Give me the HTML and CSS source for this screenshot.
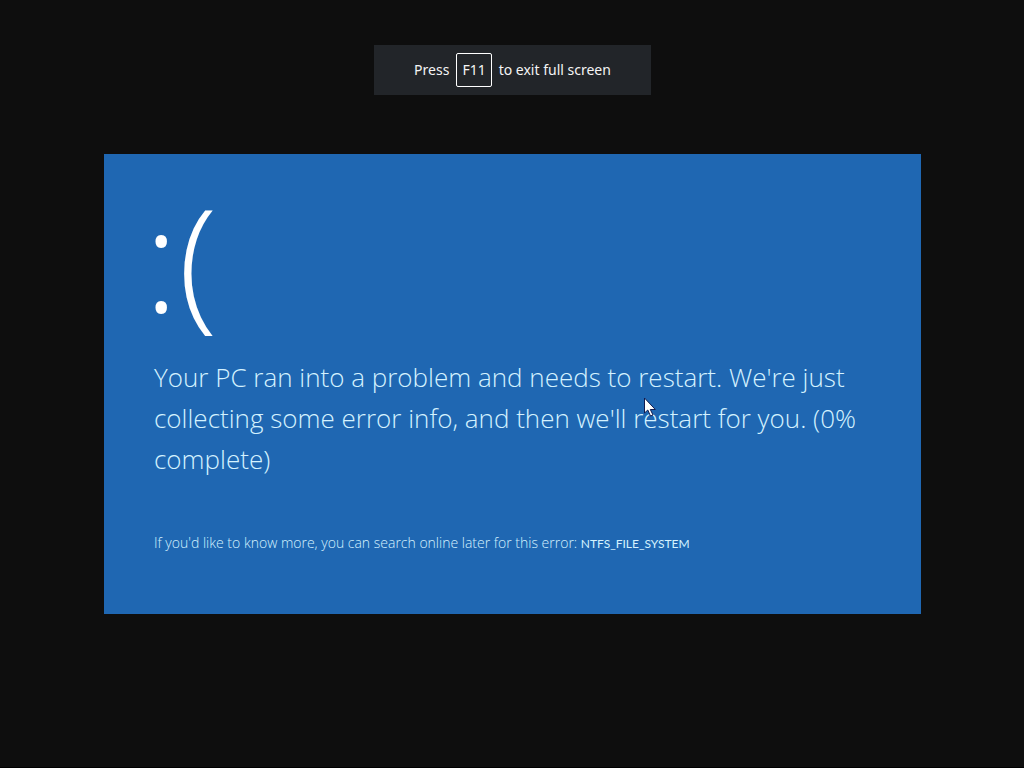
FILE: index.html
```html
<!DOCTYPE html>
<html lang="en">
<head>
<meta charset="UTF-8">
<meta name="viewport" content="width=device-width, initial-scale=1.0">
<title>Your PC ran into a problem</title>
<link rel="stylesheet" href="styles.css">
</head>
<body>
  <div class="hint">
    Press <kbd class="key">F11</kbd> to exit full screen
  </div>

  <main class="screen">
    <div class="face">:(</div>
    <p class="message">Your PC ran into a problem and needs to restart. We're just collecting some error info, and then we'll restart for you. (0% complete)</p>
    <p class="details">If you'd like to know more, you can search online later for this error: <span class="code">NTFS_FILE_SYSTEM</span></p>
  </main>

  <svg class="cursor" width="13" height="20" viewBox="0 0 13 20" aria-hidden="true">
    <path d="M.5 1v15l3.300-3 2.700 6 2.500-1-2.700-5.500h5z" fill="#fff" stroke="#101c50" stroke-width="1"/>
  </svg>
</body>
</html>
```
FILE: styles.css
```css
* {
  box-sizing: border-box;
}
body {
  margin: 0;
  min-height: 100vh;
  padding: 45px 103px 0 104px;
  display: flex;
  flex-direction: column;
  align-items: center;
  background-color: #0e0e0e;
  border-bottom: 1px solid #000;
  font-family: "Open Sans", "Noto Sans", sans-serif;
}
.hint {
  display: flex;
  align-items: center;
  gap: 7px;
  padding: 8px 40px;
  background-color: #222529;
  color: #f4f4f4;
  font-family: "Noto Sans", sans-serif;
  font-size: 14px;
  line-height: 20px;
}
.key {
  padding: 6px 5px;
  border: 1px solid #fff;
  border-radius: 2px;
  font-family: inherit;
  font-size: 14px;
}
.screen {
  width: 100%;
  margin-top: 59px;
  padding: 23px 40px 60px;
  background-color: #1f67b2;
  color: #d4f2ff;
}
.face {
  color: #fff;
  font-size: 144px;
  font-weight: 300;
  line-height: 160px;
}
.message {
  margin: 20px 0 0 10px;
  font-size: 26px;
  font-weight: 300;
  line-height: 41px;
}
.details {
  margin: 53px 0 0 10px;
  font-size: 14px;
  font-weight: 300;
  line-height: 20px;
}
.code {
  font-family: Lato, sans-serif;
  font-size: 12px;
  font-weight: 400;
}
.cursor {
  position: absolute;
  left: 644px;
  top: 397px;
}
```
